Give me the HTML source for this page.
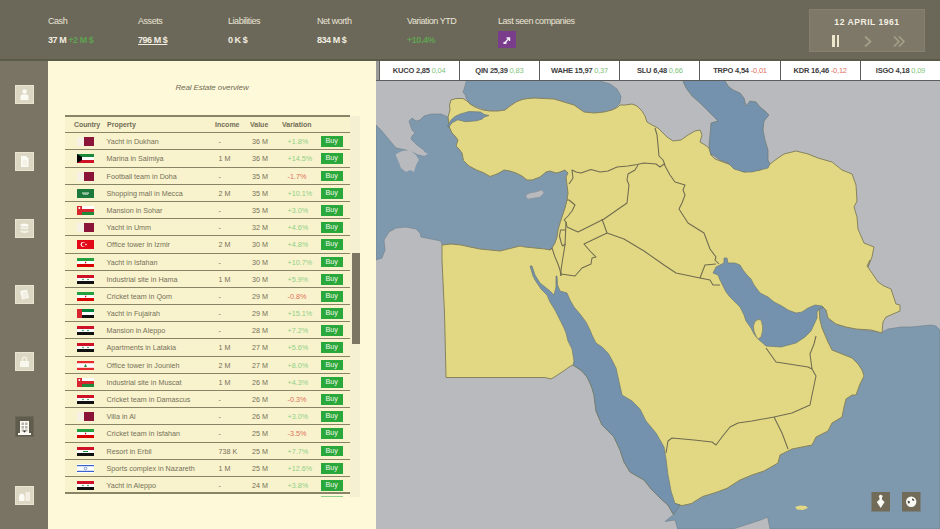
<!DOCTYPE html>
<html><head><meta charset="utf-8">
<style>
*{margin:0;padding:0;box-sizing:border-box}
html,body{width:940px;height:529px;overflow:hidden;background:#6c6859;font-family:"Liberation Sans",sans-serif}
.abs{position:absolute}
#hdr{position:absolute;left:0;top:0;width:940px;height:60px;background:#6c6859}
#hline{position:absolute;left:0;top:59px;width:940px;height:2px;background:#5a5a48}
#side{position:absolute;left:0;top:61px;width:48px;height:468px;background:#7a7464}
#panel{position:absolute;left:48px;top:61px;width:328px;height:468px;background:#fdf9d9}
.lbl{position:absolute;top:16px;font-size:9px;color:#e9e5d6;white-space:nowrap;letter-spacing:-0.45px}
.v{position:absolute;top:35px;font-size:9px;color:#f1ede0;white-space:nowrap;letter-spacing:-0.45px;font-weight:bold}
.g{color:#5ea352}
#map{position:absolute;left:376px;top:80px;width:564px;height:449px;overflow:hidden;background:#a9a9ad}
#ticker{position:absolute;left:376px;top:61px;width:564px;height:19px;background:#fff}
.tk{position:absolute;top:61px;width:80.22px;height:19px;border-left:1.5px solid #5e5e5e;text-align:center;font-size:7.5px;line-height:20px;color:#3c3c3c;font-weight:bold;white-space:nowrap;letter-spacing:-0.2px}
.tk span{font-weight:normal}
.ico{position:absolute;left:15px;width:19px;height:19px;background:#dcd7c2;border:1px solid #e8e4d0}
#tbl{position:absolute;left:65px;top:116px;width:285px;height:377px;background:#f8f3cd}
.row{position:absolute;left:65px;width:285px;height:17.19px;border-top:1.6px solid #8a8466}
.flag{position:absolute;left:12px;top:4px;width:17px;height:9px;line-height:0}
.prop,.inc,.val,.var{position:absolute;top:1px;line-height:16px;font-size:7.2px;color:#767058;white-space:nowrap}
.prop{left:41.5px}
.inc{left:153.5px}
.val{left:187px}
.var{left:222.5px}
.buy{position:absolute;left:255.5px;top:3px;width:22.5px;height:10.8px;background:#2aa83b;color:#f0f8ea;font-size:7.2px;line-height:10.8px;text-align:center}
</style></head><body>
<div id="hdr"></div>
<div id="hline"></div>
<div id="side"></div>
<div id="panel"></div>
<div class="lbl" style="left:48px">Cash</div>
<div class="lbl" style="left:138px">Assets</div>
<div class="lbl" style="left:228px">Liabilities</div>
<div class="lbl" style="left:317px">Net worth</div>
<div class="lbl" style="left:407px">Variation YTD</div>
<div class="lbl" style="left:498px">Last seen companies</div>
<div class="v" style="left:48px">37 M <span class="g">+2 M $</span></div>
<div class="v" style="left:138px;text-decoration:underline">796 M $</div>
<div class="v" style="left:228px">0 K $</div>
<div class="v" style="left:317px">834 M $</div>
<div class="v g" style="left:407px">+10.4%</div>
<div class="abs" style="left:498px;top:31px;width:18px;height:17px;background:#7a3d8c"></div>
<div class="abs" style="left:809px;top:9px;width:116px;height:43px;background:#7d7868;border:1px solid #86816f"></div>
<div class="abs" style="left:809px;top:16.5px;width:116px;text-align:center;font-size:8.6px;font-weight:bold;color:#f3efe2;letter-spacing:0.5px">12 APRIL 1961</div>
<div class="abs" style="left:832px;top:35px;width:2.6px;height:12px;background:#ece6cc"></div>
<div class="abs" style="left:836.8px;top:35px;width:2.6px;height:12px;background:#ece6cc"></div>
<svg class="abs" style="left:862px;top:35px" width="12" height="13"><path d="M3 1.5L8.5 6.5L3 11.5" fill="none" stroke="#a39e88" stroke-width="1.8"/></svg>
<svg class="abs" style="left:892px;top:35px" width="15" height="13"><path d="M2 1.5L6.8 6.5L2 11.5M7 1.5L11.8 6.5L7 11.5" fill="none" stroke="#a39e88" stroke-width="1.8"/></svg>
<svg class="abs" style="left:502px;top:35px" width="10" height="10"><path d="M2 8.5L7.5 3M4.5 3H7.5V6" fill="none" stroke="#f2ecf5" stroke-width="1.4"/><rect x="1.5" y="7" width="3" height="2" fill="#f2ecf5"/></svg>
<div id="ticker"></div>
<div class="abs" style="left:376px;top:61px;width:2.5px;height:19px;background:#9a9a98"></div>
<div class="tk" style="left:378.50px">KUCO 2,85 <span style="color:#7fc47a">0,04</span></div>
<div class="tk" style="left:458.72px">QIN 25,39 <span style="color:#7fc47a">0,83</span></div>
<div class="tk" style="left:538.94px">WAHE 15,97 <span style="color:#7fc47a">0,37</span></div>
<div class="tk" style="left:619.16px">SLU 6,48 <span style="color:#7fc47a">0,66</span></div>
<div class="tk" style="left:699.38px">TRPO 4,54 <span style="color:#e0705c">-0,01</span></div>
<div class="tk" style="left:779.60px">KDR 16,46 <span style="color:#e0705c">-0,12</span></div>
<div class="tk" style="left:859.82px">ISGO 4,18 <span style="color:#7fc47a">0,09</span></div>
<div id="map"><svg width="564" height="449" viewBox="376 80 564 449" style="display:block">
<rect x="376" y="80" width="564" height="449" fill="#b9babd"/>
<path d="M376,125 L381,130 L386,136 L391,142 L396,148 L401,149 L406,150 L412,152 L418,155 L423,156 L426,154 L424,150 L421,148 L417,145 L414,142 L411,139 L412,136 L415,133 L412,130 L411,127 L409,121 L412,118 L416,121 L420,120 L424,116 L431,114 L441,114 L448,117 L452,118 L470,130 L500,160 L540,170 L570,168 L575,200 L570,260 L545,262 L460,262 L442,245 L441,241 L431,239 L421,237 L420,233 L416,229 L406,227 L396,228 L389,232 L384,240 L385,250 L382,258 L376,260Z" fill="#7e98ad" stroke="#6f7f8c" stroke-width="0.6"/>
<path d="M467,79 L465.5,84 L464.5,88 L463,92 L465.5,95.5 L466,98 L470,104 L500,115 L600,115 L608,111 L615,108 L620,103 L621,96 L617,89 L610,84 L600,81 L600,79Z" fill="#7e98ad" stroke="#6f7f8c" stroke-width="0.6"/>
<path d="M650,480 L650,488 L661,498 L668,505 L673.5,514.6 L665,521.5 L675,520 L677.6,529 L733,529 L760.6,520 L767.6,517 L770,529 L940,529 L940,330 L936,326 L931,325 L911,327 L901,327 L888,329 L882,332 L860,330 L830,310 L815,300 L760,380 L700,470Z" fill="#7e98ad" stroke="#6f7f8c" stroke-width="0.6"/>
<path d="M396,154 L402,151 L410,150 L416,155 L419,160 L416,165 L414,172 L410,170 L406,172 L401,168 L398,160 L396,156Z" fill="#b9babd"/>
<path d="M418,150 L423,151 L428,154 L424,156 L419,154Z" fill="#b9babd"/>
<path d="M448,117 L450,110 L449.5,105 L451,100 L456,98.5 L463,98.5 L467,101 L470,104 L475,107 L480,109 L483,110 L490,111 L498,111 L505,110 L510,106 L516,102 L522,99.5 L528,98.5 L534,98 L554,99 L574,105 L584,112 L594,113 L604,112 L612,110 L618,107 L620,105 L625,105 L632,104 L637,106 L642,111 L645,116 L647,122 L652,125 L658,128 L661,131 L667,137 L673,141 L681,140 L688,135 L695,131 L700,130 L702,135 L700,142 L705,145 L709,148 L711,155 L715,159 L723,162 L731,165 L735,168 L744,172 L760,170 L770,164 L778,158 L784,154 L796,151 L808,154 L818,158 L832,162 L842,170 L852,174 L856,185 L857,201 L854,207 L857,217 L858,229 L864,243 L874,247 L872,257 L868,267 L870,260 L867,266 L872,273 L878,282 L884,286 L891,289 L894,298 L896,304 L900,305 L900,311 L886,317 L883,322 L882,333 L871,330 L856,329 L846,327 L836,324 L828,318 L826,310 L822,306 L819,309 L820,320 L822,328 L825,335 L828,342 L832,350 L842,354 L852,358 L858,364 L862,370 L864,376 L860,384 L856,395 L852,395 L846,399 L844,407 L842,417 L832,423 L828,431 L816,437 L812,445 L792,449 L780,455 L778,463 L764,471 L752,475 L740,480 L727,488.3 L716,492.4 L702.5,496.6 L691.5,503.5 L682,505.6 L675,503.5 L673.5,514.6 L668,505 L660,498 L652,490 L644,480 L630,472 L624,462 L620,450 L614,437 L602,425 L596,411 L594,395 L592,388 L590,383 L587,377 L582,371 L576,367 L573,365 L569,367 L565,370 L559,374 L556,376 L551,379 L544.7,377.5 L446,377.5 L444.5,313 L442,260 L442,245 L451,244 L461,245 L470,247 L480,249 L500,251 L520,246 L525,247 L535,248 L545,249 L550,250 L552,248 L555,243 L557,237 L558,230 L560,223 L562,217 L565,208 L567,200 L568,193 L567,185 L566,177 L568,173 L565,170 L560,172 L556,173 L550,171 L546,172 L540,177 L532,180 L527,180 L522,176 L516,173 L510,171 L504,170 L499,173 L495.6,174.5 L490,176.5 L484,173 L476.7,170 L469,166 L463.5,160.5 L462,153 L459,149 L456,146 L458,140 L455,136 L452,133 L449.3,127Z" fill="#e2d884" stroke="#86835e" stroke-width="1.0" stroke-linejoin="round"/>
<path d="M530,266 L533,276 L535,280 L541,289 L547,295 L550,302 L555,310 L560,320 L564,328 L566,333 L568,341 L572,349 L573,355 L574,361 L573,365 L576,367 L582,371 L587,377 L590,383 L592,388 L594,395 L596,411 L602,425 L614,437 L620,450 L624,462 L630,472 L644,480 L652,490 L660,498 L668,505 L673.5,514.6 L680,505 L675,503.5 L671,491 L669,480 L668,475 L666,459 L664,447 L656,433 L646,421 L640,409 L632,401 L622,395 L620,386 L618,377 L616,368 L612,360 L608,353 L602,347 L596,343 L592,335 L590,330 L586,322 L580,314 L574,307 L570,300 L567,293 L560,291 L557.5,285 L557,276 L556,276 L556,287 L554,295 L550,291 L545,287 L540,283 L535,275 L532,266Z" fill="#7492ae" stroke="#6e7a70" stroke-width="0.7" stroke-linejoin="round"/>
<path d="M724,258 L727,258 L728,263 L735,263 L740,265 L743,270 L747,275 L751,279 L754,285 L760,293 L768,297 L774,302 L780,305 L785,308 L788,310 L796,313 L802,312 L808,308 L815,305 L822,306 L823,308 L819,309 L817,312 L817,318 L811,331 L805,337 L796,343 L781,347 L766,346 L757,338 L754,334 L751,328 L746,321 L744,315 L740,307 L736,303 L730,297 L726,292 L723,286 L720,280 L718,275 L713,273 L716,267 L724,263Z" fill="#7492ae" stroke="#6e7a70" stroke-width="0.7" stroke-linejoin="round"/>
<path d="M459.7,114.2 L469.1,111.5 L480.5,112 L484.3,114.5 L489,115.5 L484,117 L482.4,118.9 L476.7,120.8 L465.4,121.7 L457.8,119.8 L452.1,122.7 L448.5,127.5 L447.5,126 L451,120 L455,116.5Z" fill="#7492ae" stroke="#6e7a70" stroke-width="0.7" stroke-linejoin="round"/>
<path d="M682,79 L686,88 L692,96 L700,103 L707,110 L713,116 L718,121 L711,123 L710,135 L709,145 L711,155 L713,155 L720,160 L728,163 L734,169 L744,172 L752,172 L760,170 L768,168 L770,164 L768,160 L768,150 L765,140 L763,130 L764,121 L769,115 L765,111 L760,107 L756,102 L750,101 L746,106 L744,98 L740,93 L733,90 L728,86 L724,79Z" fill="#7492ae" stroke="#6e7a70" stroke-width="0.7" stroke-linejoin="round"/>
<path d="M755,321.6 L758,319.5 L761,320 L762.5,326 L762.5,331 L761,337 L758,339 L756.5,337 L754,331 L753.5,326Z" fill="#e2d884" stroke="#86835e" stroke-width="0.7"/>
<path d="M526,195 L530,193 L536,192 L542,190 L544,193 L540,197 L534,198 L528,199 L526,197Z" fill="#b9babd" stroke="#8a8f96" stroke-width="0.5"/>
<path d="M795,507 L800,505.5 L806,506 L808,508 L803,510 L797,509.5Z" fill="#e2d884"/>
<path d="M569,184 L573,178 L572,170 L576,172 L581,173 L591,169.5 L600,172 L608,171 L617,167 L628,166 L637,164.5 L644,163 L656,164 L660,167 L664,164" fill="none" stroke="#6f6b4f" stroke-width="1.05" stroke-linejoin="round"/>
<path d="M655,128 L657,135 L658,145 L659,156 L663,160 L665,165" fill="none" stroke="#6f6b4f" stroke-width="1.05" stroke-linejoin="round"/>
<path d="M664,164 L670,175 L675,182 L685,185 L683,190 L685,195 L682,203 L679,209 L688,223 L704,233 L710,249 L716,257 L715,260 L719,264" fill="none" stroke="#6f6b4f" stroke-width="1.05" stroke-linejoin="round"/>
<path d="M638,165 L635,170 L628,174 L627,180 L629,185 L627,203 L604,219 L578,232 L567,227" fill="none" stroke="#6f6b4f" stroke-width="1.05" stroke-linejoin="round"/>
<path d="M602,219 L607,233" fill="none" stroke="#6f6b4f" stroke-width="1.05" stroke-linejoin="round"/>
<path d="M607,233 L584,244 L590,251 L596,257 L592,258 L591,264 L582,268 L575,276 L561,274" fill="none" stroke="#6f6b4f" stroke-width="1.05" stroke-linejoin="round"/>
<path d="M607,233 L624,239 L644,251 L664,265 L676,273 L700,278 L705,265 L716,264" fill="none" stroke="#6f6b4f" stroke-width="1.05" stroke-linejoin="round"/>
<path d="M700,278 L710,280 L713,285 L720,285" fill="none" stroke="#6f6b4f" stroke-width="1.05" stroke-linejoin="round"/>
<path d="M567,200 L569,200 L575,205 L572,211 L568,216 L564,220" fill="none" stroke="#6f6b4f" stroke-width="1.05" stroke-linejoin="round"/>
<path d="M566,222 L565,245 L563,257 L561,270 L561,276" fill="none" stroke="#6f6b4f" stroke-width="1.05" stroke-linejoin="round"/>
<path d="M565.5,230 L560.5,230 L559.5,236 L561,242 L562.5,246 L565.5,244" fill="none" stroke="#6f6b4f" stroke-width="1.05" stroke-linejoin="round"/>
<path d="M564,220 L566,222 L567,227" fill="none" stroke="#6f6b4f" stroke-width="1.05" stroke-linejoin="round"/>
<path d="M550,250 L552,248 L555,257 L558,264 L560,270 L561,276" fill="none" stroke="#6f6b4f" stroke-width="1.05" stroke-linejoin="round"/>
<path d="M666,453 L668,441 L672,438 L694,440 L712,442 L716,445 L722,437 L730,427 L738,423 L752,421 L774,417 L792,413 L810,405 L812,395 L816,376 L812,369" fill="none" stroke="#6f6b4f" stroke-width="1.05" stroke-linejoin="round"/>
<path d="M774,417 L782,433 L788,449" fill="none" stroke="#6f6b4f" stroke-width="1.05" stroke-linejoin="round"/>
<path d="M766,348 L776,362 L808,367 L812,369 L810,354 L814,344 L816,336" fill="none" stroke="#6f6b4f" stroke-width="1.05" stroke-linejoin="round"/>
<rect x="871.5" y="492" width="18.5" height="19.5" fill="#716b58"/>
<rect x="902" y="492" width="18.5" height="19.5" fill="#716b58"/>
<circle cx="880.7" cy="496.6" r="1.8" fill="#fbfbf6"/><path d="M879.5 498H881.9V499.5L884.6 502L880.7 508L876.8 502L879.5 499.5Z" fill="#fbfbf6"/>
<circle cx="911.2" cy="501.8" r="5.2" fill="#fbfbf6"/><path d="M907.5 501.5Q909 500 910 502Q909.5 504 908.3 503.5Z M912 498.5Q914 498.5 914.5 500.5Q913 501 912 500Z" fill="#4a4a40"/>
</svg></div>
<div class="abs" style="left:376px;top:79.5px;width:564px;height:1.2px;background:#5c5c5c"></div>
<div class="abs" style="left:48px;top:83.3px;width:328px;text-align:center;font-size:8px;font-style:italic;color:#6f6a55;letter-spacing:-0.1px">Real Estate overview</div>
<div id="tbl"></div>
<div class="abs" style="left:65px;top:115px;width:285px;height:1.8px;background:#8a8466"></div>
<div class="abs" style="left:74px;top:116px;line-height:17px;font-size:7px;font-weight:bold;color:#726d57;letter-spacing:-0.1px">Country</div>
<div class="abs" style="left:107px;top:116px;line-height:17px;font-size:7px;font-weight:bold;color:#726d57">Property</div>
<div class="abs" style="left:215px;top:116px;line-height:17px;font-size:7px;font-weight:bold;color:#726d57">Income</div>
<div class="abs" style="left:250px;top:116px;line-height:17px;font-size:7px;font-weight:bold;color:#726d57">Value</div>
<div class="abs" style="left:282px;top:116px;line-height:17px;font-size:7px;font-weight:bold;color:#726d57">Variation</div>
<div class="row" style="top:132.20px">
<div class="flag"><svg width="17" height="9"><rect width="17" height="9" fill="#f6f1e4"/><rect x="7" width="10" height="9" fill="#8a1538"/></svg></div><div class="prop">Yacht in Dukhan</div><div class="inc">-</div><div class="val">36 M</div><div class="var" style="color:#8fcf86">+1.8%</div><div class="buy">Buy</div></div>
<div class="row" style="top:149.39px">
<div class="flag"><svg width="17" height="9"><rect width="17" height="3" fill="#1a8a3a"/><rect y="3" width="17" height="3" fill="#fff"/><rect y="6" width="17" height="3" fill="#ce1126"/><path d="M0 0L5 3V6L0 9Z" fill="#000"/></svg></div><div class="prop">Marina in Salmiya</div><div class="inc">1 M</div><div class="val">36 M</div><div class="var" style="color:#8fcf86">+14.5%</div><div class="buy">Buy</div></div>
<div class="row" style="top:166.58px">
<div class="flag"><svg width="17" height="9"><rect width="17" height="9" fill="#f6f1e4"/><rect x="7" width="10" height="9" fill="#8a1538"/></svg></div><div class="prop">Football team in Doha</div><div class="inc">-</div><div class="val">35 M</div><div class="var" style="color:#e0705c">-1.7%</div><div class="buy">Buy</div></div>
<div class="row" style="top:183.77px">
<div class="flag"><svg width="17" height="9"><rect width="17" height="9" fill="#1b7a3c"/><rect x="5" y="3.5" width="7" height="1.2" fill="#cfe5cf"/><rect x="6" y="5.3" width="5" height="0.6" fill="#cfe5cf"/></svg></div><div class="prop">Shopping mall in Mecca</div><div class="inc">2 M</div><div class="val">35 M</div><div class="var" style="color:#8fcf86">+10.1%</div><div class="buy">Buy</div></div>
<div class="row" style="top:200.96px">
<div class="flag"><svg width="17" height="9"><rect width="17" height="9" fill="#d8262f"/><rect x="5" width="12" height="3" fill="#fff"/><rect x="5" y="6" width="12" height="3" fill="#1f8a3a"/><rect x="5" y="3" width="12" height="3" fill="#d8262f"/><rect width="5" height="9" fill="#d8262f"/><circle cx="2.3" cy="2" r="1" fill="#fff"/></svg></div><div class="prop">Mansion in Sohar</div><div class="inc">-</div><div class="val">35 M</div><div class="var" style="color:#8fcf86">+3.0%</div><div class="buy">Buy</div></div>
<div class="row" style="top:218.15px">
<div class="flag"><svg width="17" height="9"><rect width="17" height="9" fill="#f6f1e4"/><rect x="7" width="10" height="9" fill="#8a1538"/></svg></div><div class="prop">Yacht in Umm</div><div class="inc">-</div><div class="val">32 M</div><div class="var" style="color:#8fcf86">+4.6%</div><div class="buy">Buy</div></div>
<div class="row" style="top:235.34px">
<div class="flag"><svg width="17" height="9"><rect width="17" height="9" fill="#e30a17"/><circle cx="6" cy="4.5" r="2.4" fill="#fff"/><circle cx="6.7" cy="4.5" r="1.9" fill="#e30a17"/><circle cx="9" cy="4.5" r="0.8" fill="#fff"/></svg></div><div class="prop">Office tower in Izmir</div><div class="inc">2 M</div><div class="val">30 M</div><div class="var" style="color:#8fcf86">+4.8%</div><div class="buy">Buy</div></div>
<div class="row" style="top:252.53px">
<div class="flag"><svg width="17" height="9"><rect width="17" height="3" fill="#239f40"/><rect y="3" width="17" height="3" fill="#fff"/><rect y="6" width="17" height="3" fill="#da0000"/><rect x="8" y="3.7" width="1.2" height="1.6" fill="#da0000"/></svg></div><div class="prop">Yacht in Isfahan</div><div class="inc">-</div><div class="val">30 M</div><div class="var" style="color:#8fcf86">+10.7%</div><div class="buy">Buy</div></div>
<div class="row" style="top:269.72px">
<div class="flag"><svg width="17" height="9"><rect width="17" height="3" fill="#ce1126"/><rect y="3" width="17" height="3" fill="#fff"/><rect y="6" width="17" height="3" fill="#111"/><circle cx="6" cy="4.5" r="0.8" fill="#1a8a3a"/><circle cx="11" cy="4.5" r="0.8" fill="#1a8a3a"/></svg></div><div class="prop">Industrial site in Hama</div><div class="inc">1 M</div><div class="val">30 M</div><div class="var" style="color:#8fcf86">+5.9%</div><div class="buy">Buy</div></div>
<div class="row" style="top:286.91px">
<div class="flag"><svg width="17" height="9"><rect width="17" height="3" fill="#239f40"/><rect y="3" width="17" height="3" fill="#fff"/><rect y="6" width="17" height="3" fill="#da0000"/><rect x="8" y="3.7" width="1.2" height="1.6" fill="#da0000"/></svg></div><div class="prop">Cricket team in Qom</div><div class="inc">-</div><div class="val">29 M</div><div class="var" style="color:#e0705c">-0.8%</div><div class="buy">Buy</div></div>
<div class="row" style="top:304.10px">
<div class="flag"><svg width="17" height="9"><rect width="17" height="3" fill="#00843d"/><rect y="3" width="17" height="3" fill="#fff"/><rect y="6" width="17" height="3" fill="#111"/><rect width="5" height="9" fill="#d8262f"/></svg></div><div class="prop">Yacht in Fujairah</div><div class="inc">-</div><div class="val">29 M</div><div class="var" style="color:#8fcf86">+15.1%</div><div class="buy">Buy</div></div>
<div class="row" style="top:321.29px">
<div class="flag"><svg width="17" height="9"><rect width="17" height="3" fill="#ce1126"/><rect y="3" width="17" height="3" fill="#fff"/><rect y="6" width="17" height="3" fill="#111"/><circle cx="6" cy="4.5" r="0.8" fill="#1a8a3a"/><circle cx="11" cy="4.5" r="0.8" fill="#1a8a3a"/></svg></div><div class="prop">Mansion in Aleppo</div><div class="inc">-</div><div class="val">28 M</div><div class="var" style="color:#8fcf86">+7.2%</div><div class="buy">Buy</div></div>
<div class="row" style="top:338.48px">
<div class="flag"><svg width="17" height="9"><rect width="17" height="3" fill="#ce1126"/><rect y="3" width="17" height="3" fill="#fff"/><rect y="6" width="17" height="3" fill="#111"/><circle cx="6" cy="4.5" r="0.8" fill="#1a8a3a"/><circle cx="11" cy="4.5" r="0.8" fill="#1a8a3a"/></svg></div><div class="prop">Apartments in Latakia</div><div class="inc">1 M</div><div class="val">27 M</div><div class="var" style="color:#8fcf86">+5.6%</div><div class="buy">Buy</div></div>
<div class="row" style="top:355.67px">
<div class="flag"><svg width="17" height="9"><rect width="17" height="9" fill="#fff"/><rect width="17" height="2.2" fill="#e52b2b"/><rect y="6.8" width="17" height="2.2" fill="#e52b2b"/><path d="M8.5 2.8L10 6H7Z" fill="#1f9a3a"/></svg></div><div class="prop">Office tower in Jounieh</div><div class="inc">2 M</div><div class="val">27 M</div><div class="var" style="color:#8fcf86">+8.0%</div><div class="buy">Buy</div></div>
<div class="row" style="top:372.86px">
<div class="flag"><svg width="17" height="9"><rect width="17" height="9" fill="#d8262f"/><rect x="5" width="12" height="3" fill="#fff"/><rect x="5" y="6" width="12" height="3" fill="#1f8a3a"/><rect x="5" y="3" width="12" height="3" fill="#d8262f"/><rect width="5" height="9" fill="#d8262f"/><circle cx="2.3" cy="2" r="1" fill="#fff"/></svg></div><div class="prop">Industrial site in Muscat</div><div class="inc">1 M</div><div class="val">26 M</div><div class="var" style="color:#8fcf86">+4.3%</div><div class="buy">Buy</div></div>
<div class="row" style="top:390.05px">
<div class="flag"><svg width="17" height="9"><rect width="17" height="3" fill="#ce1126"/><rect y="3" width="17" height="3" fill="#fff"/><rect y="6" width="17" height="3" fill="#111"/><circle cx="6" cy="4.5" r="0.8" fill="#1a8a3a"/><circle cx="11" cy="4.5" r="0.8" fill="#1a8a3a"/></svg></div><div class="prop">Cricket team in Damascus</div><div class="inc">-</div><div class="val">26 M</div><div class="var" style="color:#e0705c">-0.3%</div><div class="buy">Buy</div></div>
<div class="row" style="top:407.24px">
<div class="flag"><svg width="17" height="9"><rect width="17" height="9" fill="#f6f1e4"/><rect x="7" width="10" height="9" fill="#8a1538"/></svg></div><div class="prop">Villa in Al</div><div class="inc">-</div><div class="val">26 M</div><div class="var" style="color:#8fcf86">+3.0%</div><div class="buy">Buy</div></div>
<div class="row" style="top:424.43px">
<div class="flag"><svg width="17" height="9"><rect width="17" height="3" fill="#239f40"/><rect y="3" width="17" height="3" fill="#fff"/><rect y="6" width="17" height="3" fill="#da0000"/><rect x="8" y="3.7" width="1.2" height="1.6" fill="#da0000"/></svg></div><div class="prop">Cricket team in Isfahan</div><div class="inc">-</div><div class="val">25 M</div><div class="var" style="color:#e0705c">-3.5%</div><div class="buy">Buy</div></div>
<div class="row" style="top:441.62px">
<div class="flag"><svg width="17" height="9"><rect width="17" height="3" fill="#ce1126"/><rect y="3" width="17" height="3" fill="#fff"/><rect y="6" width="17" height="3" fill="#111"/><rect x="6" y="4" width="5" height="1" fill="#1a8a3a"/></svg></div><div class="prop">Resort in Erbil</div><div class="inc">738 K</div><div class="val">25 M</div><div class="var" style="color:#8fcf86">+7.7%</div><div class="buy">Buy</div></div>
<div class="row" style="top:458.81px">
<div class="flag"><svg width="17" height="9"><rect width="17" height="9" fill="#fff"/><rect y="1" width="17" height="1.2" fill="#3a62c8"/><rect y="6.8" width="17" height="1.2" fill="#3a62c8"/><circle cx="8.5" cy="4.5" r="1.3" fill="none" stroke="#3a62c8" stroke-width="0.6"/></svg></div><div class="prop">Sports complex in Nazareth</div><div class="inc">1 M</div><div class="val">25 M</div><div class="var" style="color:#8fcf86">+12.6%</div><div class="buy">Buy</div></div>
<div class="row" style="top:476.00px">
<div class="flag"><svg width="17" height="9"><rect width="17" height="3" fill="#ce1126"/><rect y="3" width="17" height="3" fill="#fff"/><rect y="6" width="17" height="3" fill="#111"/><circle cx="6" cy="4.5" r="0.8" fill="#1a8a3a"/><circle cx="11" cy="4.5" r="0.8" fill="#1a8a3a"/></svg></div><div class="prop">Yacht in Aleppo</div><div class="inc">-</div><div class="val">24 M</div><div class="var" style="color:#8fcf86">+3.8%</div><div class="buy">Buy</div></div>
<div class="abs" style="left:65px;top:492px;width:285px;height:1.6px;background:#8a8466"></div>
<div class="abs" style="left:350px;top:116px;width:9.5px;height:381px;background:#f5f0d2"></div>
<div class="abs" style="left:321px;top:496px;width:22px;height:1.2px;background:#8fd08c"></div>
<div class="abs" style="left:352px;top:253px;width:7.5px;height:91px;background:#7c7563"></div>
<div class="ico" style="top:85px"><svg width="17" height="17"><circle cx="8.5" cy="5.5" r="2.3" fill="#fbfaf3"/><path d="M4.5 14V10.5Q4.5 8.5 6.5 8.5H10.5Q12.5 8.5 12.5 10.5V14Z" fill="#fbfaf3"/></svg></div>
<div class="ico" style="top:152px"><svg width="17" height="17"><path d="M5 3H10L12.5 5.5V14H5Z" fill="#fbfaf3"/><path d="M6.5 8H11M6.5 10H11M6.5 12H11" stroke="#e4e0cc" stroke-width="0.6"/></svg></div>
<div class="ico" style="top:219px"><svg width="17" height="17"><ellipse cx="8.5" cy="5" rx="4" ry="1.5" fill="#fbfaf3"/><path d="M4.5 6.5Q8.5 8.5 12.5 6.5V8.5Q8.5 10.5 4.5 8.5ZM4.5 10Q8.5 12 12.5 10V12Q8.5 14 4.5 12Z" fill="#f4f2e6"/></svg></div>
<div class="ico" style="top:285px"><svg width="17" height="17"><path d="M4 5L11 3.5L13 12L6 13.5Z" fill="#f8f7ee"/><path d="M7 7H11M7 9H11M7 11H10" stroke="#e3dfcb" stroke-width="0.7"/></svg></div>
<div class="ico" style="top:352px"><svg width="17" height="17"><path d="M4 8H13V14H4Z" fill="#f8f7ee"/><path d="M6.5 8V5.5Q8.5 3 10.5 5.5V8" fill="none" stroke="#f8f7ee" stroke-width="1.2"/></svg></div>
<div class="ico" style="top:486px"><svg width="17" height="17"><path d="M3 10Q3 6.5 6 6.5Q8.5 7 8.5 10V14H3Z" fill="#fbfaf3"/><path d="M9.5 5H14V14H9.5Z" fill="#f2efe2"/></svg></div>
<div class="abs" style="left:15px;top:416px;width:19px;height:21px;background:#5f5b4d;border:1px solid #6b6757"><svg width="17" height="19" style="display:block"><path d="M4 4H13V16H4Z" fill="#fbfaf5"/><path d="M5.5 5.5H8V8H5.5ZM9 5.5H11.5V8H9ZM5.5 9H8V11.5H5.5ZM9 9H11.5V11.5H9ZM5.5 12.5H8V14.5H5.5ZM9 12.5H11.5V14.5H9Z" fill="#b7b3a6"/><circle cx="8.5" cy="14.3" r="1.1" fill="#333"/><path d="M2 16H15V18H2Z" fill="#fbfaf5"/></svg></div>
</body></html>
